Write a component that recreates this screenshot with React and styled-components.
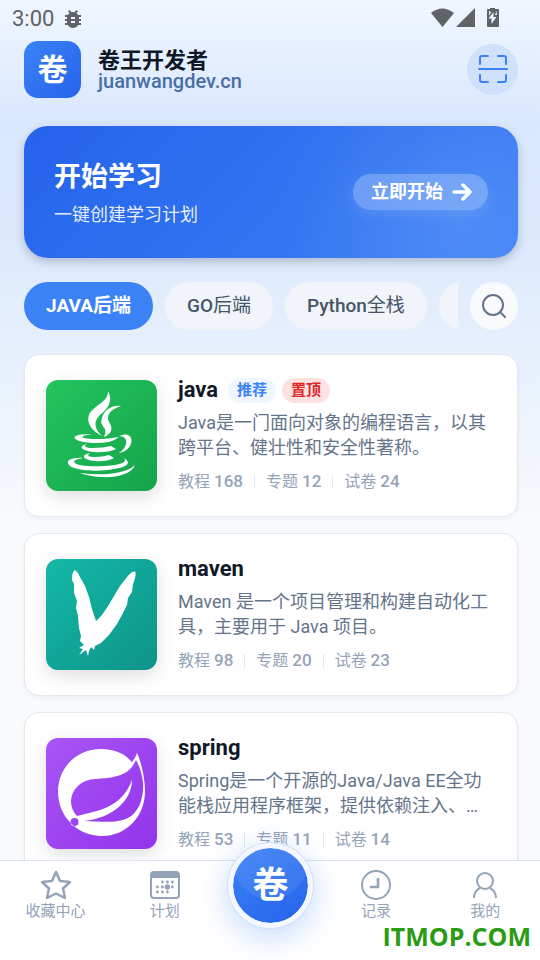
import React, { useState } from "react"
import styled, { createGlobalStyle } from "styled-components"

const GlobalStyle = createGlobalStyle`
  * {
    box-sizing: border-box;
  }
  body {
    margin: 0;
    font-family: Roboto, "Noto Sans CJK SC", sans-serif;
    color: #111827;
  }
  button {
    font-family: inherit;
    border: 0;
    padding: 0;
    cursor: pointer;
  }
  h1, h2, h3, p {
    margin: 0;
  }
`

const Page = styled.div`
  position: relative;
  display: flex;
  flex-direction: column;
  height: 100vh;
  overflow: hidden;
  background: linear-gradient(
    180deg,
    #f0f6ff 0,
    #dae8fe 120px,
    #dce9fd 230px,
    #e8f1fd 370px,
    #f8fafc 520px
  );
`

const StatusBar = styled.div`
  display: flex;
  align-items: center;
  height: 37px;
  padding: 0 41px 0 12px;
  font-size: 22px;
  line-height: 37px;
  color: #5f6368;
`

const StatusIcons = styled.div`
  display: flex;
  flex: 1;
  align-items: center;
  justify-content: ${({ $end }) => ($end ? "flex-end" : "flex-start")};
  margin-left: 7px;
`

const Header = styled.header`
  display: flex;
  align-items: center;
  gap: 17px;
  padding: 4px 22px 0 24px;
`

const Logo = styled.div`
  display: grid;
  place-items: center;
  width: 57px;
  height: 57px;
  border-radius: 14px;
  background: linear-gradient(135deg, #3b82f6, #2563eb);
  color: #fff;
  font-size: 30px;
  font-weight: 700;
  line-height: 30px;
`

const Brand = styled.div`
  flex: 1;
`

const BrandName = styled.h1`
  font-size: 22px;
  font-weight: 700;
  line-height: 22px;
`

const BrandUrl = styled.p`
  font-size: 20px;
  font-weight: 500;
  line-height: 18px;
  color: #4a6fa5;
`

const ScanButton = styled.button`
  display: grid;
  place-items: center;
  width: 51px;
  height: 51px;
  border-radius: 50%;
  background: #d0e1fd;
`

const Content = styled.main`
  flex: 1;
  min-height: 0;
  overflow-y: auto;
  scrollbar-width: none;
  padding: 28px 22px 0 24px;
`

const Hero = styled.section`
  display: flex;
  align-items: center;
  justify-content: space-between;
  height: 132px;
  padding: 0 30px;
  border-radius: 24px;
  background:
    radial-gradient(circle at 88% 72%, rgba(255, 255, 255, 0.11), transparent 180px),
    linear-gradient(135deg, #2563eb, #3b82f6);
  box-shadow: 0 4px 10px rgba(50, 65, 90, 0.28);
  color: #fff;
`

const HeroTitle = styled.h2`
  font-size: 27px;
  font-weight: 700;
  line-height: 40px;
`

const HeroText = styled.p`
  margin-top: 6px;
  font-size: 18px;
  line-height: 24px;
  color: rgba(255, 255, 255, 0.9);
`

const StartButton = styled.button`
  display: flex;
  align-items: center;
  gap: 9px;
  height: 36px;
  padding: 0 16px 0 18px;
  border-radius: 18px;
  background: rgba(255, 255, 255, 0.25);
  box-shadow: 0 4px 12px rgba(255, 255, 255, 0.12);
  color: #fff;
  font-size: 18px;
  font-weight: 700;
  line-height: 34px;
`

const Toolbar = styled.div`
  display: flex;
  gap: 12px;
  margin-top: 24px;
`

const Tabs = styled.div`
  display: flex;
  flex: 1;
  gap: 12px;
  min-width: 0;
  overflow: hidden;
`

const Tab = styled.button`
  flex: none;
  height: 48px;
  padding: 0 22px;
  border-radius: 24px;
  background: ${({ $active }) => ($active ? "#3b82f6" : "#f1f5f9")};
  color: ${({ $active }) => ($active ? "#fff" : "#475569")};
  font-size: 19px;
  font-weight: ${({ $active }) => ($active ? 700 : 500)};
  line-height: 46px;
`

const TabCjk = styled.span`
  font-weight: ${({ $active }) => ($active ? 700 : 400)};
`

const SearchButton = styled.button`
  display: grid;
  flex: none;
  place-items: center;
  width: 48px;
  height: 48px;
  border-radius: 50%;
  background: #f8fafc;
`

const List = styled.div`
  display: grid;
  gap: 16px;
  padding: 24px 0;
`

const Card = styled.article`
  display: flex;
  align-items: flex-start;
  gap: 21px;
  min-height: 163px;
  padding: 20px 21px;
  border: 1px solid #e2e8f0;
  border-radius: 15px;
  background: #fff;
  box-shadow: 0 2px 4px rgba(30, 64, 120, 0.05);
`

const Cover = styled.div`
  flex: none;
  width: 111px;
  height: 111px;
  margin-top: 5px;
  border-radius: 12px;
  background: linear-gradient(135deg, ${({ $from }) => $from}, ${({ $to }) => $to});
  box-shadow: 0 6px 18px rgba(0, 0, 0, 0.13);
`

const CardBody = styled.div`
  flex: 1;
  min-width: 0;
`

const CardHead = styled.div`
  display: flex;
  align-items: center;
  gap: 6px;
  height: 30px;
`

const CardTitle = styled.h3`
  margin-right: 4px;
  font-size: 22px;
  font-weight: 700;
  line-height: 30px;
`

const Tag = styled.span`
  height: 25px;
  padding: 0 9px;
  border-radius: 13px;
  background: ${({ $hot }) => ($hot ? "#fee2e2" : "#eff6ff")};
  color: ${({ $hot }) => ($hot ? "#dc2626" : "#3b82f6")};
  font-size: 15px;
  font-weight: 700;
  line-height: 24px;
`

const Description = styled.p`
  display: -webkit-box;
  margin-top: 5px;
  overflow: hidden;
  -webkit-box-orient: vertical;
  -webkit-line-clamp: 2;
  font-size: 18px;
  line-height: 25px;
  color: #64748b;
`

const Stats = styled.div`
  display: flex;
  align-items: center;
  margin-top: 9px;
  font-size: 16px;
  line-height: 25px;
  color: #94a3b8;

  b {
    font-size: 17px;
    font-weight: 500;
  }
`

const Divider = styled.i`
  width: 1px;
  height: 14px;
  margin: 0 11px;
  background: #e2e8f0;
`

const NavBar = styled.nav`
  position: relative;
  display: grid;
  grid-template-columns: 1fr 1fr 102px 1fr 1fr;
  flex: none;
  height: 100px;
  padding-left: 1px;
  border-top: 1px solid #dbe5f1;
  background: #fff;
`

const NavButton = styled.button`
  display: flex;
  flex-direction: column;
  align-items: center;
  height: 62px;
  padding-top: 9px;
  background: none;
  color: #94a3b8;
  font-size: 15px;
  line-height: 22px;
`

const CenterButton = styled.button`
  display: grid;
  place-items: center;
  justify-self: center;
  width: 85px;
  height: 85px;
  margin-top: -18px;
  border: 5px solid #f3f7ff;
  border-radius: 50%;
  background:
    radial-gradient(circle at 50% 18%, rgba(255, 255, 255, 0.07) 37px, transparent 38px) padding-box,
    linear-gradient(145deg, #3b82f6, #2563eb) padding-box;
  box-shadow: 0 0 0 1px #cfdef5, 0 8px 32px rgba(59, 130, 246, 0.32);
  color: #fff;
  font-size: 36px;
  font-weight: 700;
  line-height: 36px;
`

const Watermark = styled.div`
  position: absolute;
  right: 9px;
  bottom: 6px;
  font-family: "Open Sans", sans-serif;
  font-size: 25px;
  font-weight: 700;
  line-height: 36px;
  color: #2a9b12;
`

const BugIcon = () => (
  <svg width="24" height="24" viewBox="0 0 24 24" fill="currentColor">
    <path d="M20 8h-2.81a6 6 0 0 0-1.82-1.96L17 4.41 15.59 3l-2.17 2.17a6 6 0 0 0-2.83 0L8.41 3 7 4.41l1.62 1.63A6 6 0 0 0 6.81 8H4v2h2.09A6 6 0 0 0 6 11v1H4v2h2v1q0 .5.09 1H4v2h2.81a6 6 0 0 0 10.38 0H20v-2h-2.09q.09-.5.09-1v-1h2v-2h-2v-1q0-.5-.09-1H20zm-6 8h-4v-2h4zm0-4h-4v-2h4z" />
  </svg>
)

const SignalIcons = () => (
  <svg width="68" height="22" viewBox="0 1 68 22" fill="currentColor">
    <path d="M0 6Q11-3 23 6L11.500 20z" />
    <path d="M44 1V20H25z" />
    <path
      fillRule="evenodd"
      d="M59 0h5v2h3q1 0 1 1v16q0 1-1 1H57q-1 0-1-1V3q0-1 1-1h2zM62.500 5l-5 6.500h3V17l5-7h-3zM58 4v5l2-4zM65.500 4l-1.500 4h2z"
    />
  </svg>
)

const ScanIcon = () => (
  <svg width="30" height="30" viewBox="0 1 30 30" fill="none" stroke="#3b82f6" strokeWidth="2" strokeLinecap="round">
    <path d="M10 2H4Q2 2 2 4V10M20 2H26Q28 2 28 4V10M2 21V26Q2 28 4 28H10M28 21V26Q28 28 26 28H20M1 15H29" />
  </svg>
)

const ArrowIcon = () => (
  <svg width="20" height="20" viewBox="0 0 20 20" fill="none" stroke="currentColor" strokeWidth="3.500" strokeLinecap="round" strokeLinejoin="round">
    <path d="M2 10H18M11 3L18 10L11 17" />
  </svg>
)

const SearchIcon = () => (
  <svg width="26" height="26" viewBox="0 0 26 26" fill="none" stroke="#64748b" strokeWidth="2" strokeLinecap="round">
    <circle cx="12" cy="12" r="10" />
    <path d="M19 19L24 24" />
  </svg>
)

const JavaArt = () => (
  <svg viewBox="0 0 111 111" fill="#fff">
    <path d="M62 11C68 23 60 30 53 36C47 43 49 49 56 56C46 51 40 43 43 35C46 26 63 22 62 11z" />
    <path d="M75 26C66 29 62 33 62 38C62 43 67 45 65 51Q63 55 58 57Q60 52 59 49C56 45 54 42 56 38C58 30 66 25 75 26z" />
    <path d="M46 54C38 55 34 57 38 58C46 60 63 59 73 57Q68 61 63 62C51 64 37 63 31 60C24 56 33 54 46 54z" />
    <path d="M73 56C79 53 85.500 54 85.500 61C85 68 79 72 73 73C79 69 81 64 80 60Q78 56 73 56z" />
    <path d="M41 64C37 66 39 68 47 68Q57 68 65 66L70 69Q61 73 48 72C36 71 31 66 41 64z" />
    <path d="M44 73C40 76 43 77 49 77Q57 77 63 75L68 78Q60 82 49 81C37 80 34 75 44 73z" />
    <path d="M37 78Q27 80 28 82C30 86 45 87 59 86C75 85 82 82 78 78C86 83 81 87 68 89C53 92 31 91 24 86C18 81 25 77 37 78z" />
    <path d="M89 85C86 94 70 98 55 97Q42 96 34 93C56 96 80 94 89 85z" />
  </svg>
)

const MavenArt = () => (
  <svg viewBox="0 0 111 111" fill="#fff">
    <path d="M29 11Q32 13 34 18L39 27L43 38L46 50L50 62L56 56L62 47L68 37L74 27L81 18Q87 11 89.500 13Q90 18 87 25L86 33L82 39L81 46L77 54L71 65L63 76L55 84L49 87L48 91L45 88L43 92L42 97L40 91L33 96L37 90L33 89L38 86L34 82L35 77L33 69L32 57L30 49L31 42L28 34L28 25L26 21Q26 12 29 11z" />
  </svg>
)

const SpringArt = () => (
  <svg viewBox="0 0 111 111" fill="#fff">
    <path
      fillRule="evenodd"
      d="M91 15C94 21 99 38 99 53C99 79 80 98 56 98C31 98 12 78 12 54C12 29 31 11 55 11C69 11 79 16 86 24Q89 21 91 15zM90 22C86 31 80 36 71 38C56 43 42 37 31 49C23 57 23 70 31 78L47 74C67 69 79 60 86 42C86 62 67 80 38 83C58 84 72 85 82 80C93 74 98 60 97 45Q96 33 90 22zM28.500 80A4 4 0 1 0 28.500 88A4 4 0 1 0 28.500 80z"
    />
  </svg>
)

const StarIcon = () => (
  <svg width="32" height="30" viewBox="0 0 32 30" fill="none" stroke="currentColor" strokeWidth="2.500" strokeLinejoin="round">
    <path d="M16 2L20 11L30 12L23 18.500L25 28L16 23.500L7 28L9 18.500L2 12L12 11z" />
  </svg>
)

const calendarDots = [
  [12.4, 12], [17.4, 12], [22.4, 12],
  [7.4, 17], [12.4, 17], [22.4, 17],
  [7.4, 22], [12.4, 22], [17.4, 22],
]

const CalendarIcon = () => (
  <svg width="30" height="30" viewBox="0 0 30 30" fill="currentColor">
    <path fillRule="evenodd" d="M4 1H26Q30 1 30 5V25Q30 29 26 29H4Q0 29 0 25V5Q0 1 4 1zM2 8V25Q2 27 4 27H26Q28 27 28 25V8z" />
    {calendarDots.map(([x, y]) => (
      <circle key={`${x}-${y}`} cx={x} cy={y} r="1.400" />
    ))}
    <circle cx="17.400" cy="17" r="2.700" />
  </svg>
)

const ClockIcon = () => (
  <svg width="30" height="30" viewBox="0 0 30 30" fill="none" stroke="currentColor" strokeWidth="2">
    <circle cx="15" cy="15" r="14" />
    <path d="M17 8V17H9" strokeWidth="2.500" />
  </svg>
)

const UserIcon = () => (
  <svg width="30" height="30" viewBox="0 0 30 30" fill="none" stroke="currentColor" strokeWidth="2">
    <circle cx="15" cy="11" r="8" />
    <path d="M4 28Q4 21 10 18M26 28Q26 21 20 18" />
  </svg>
)

const tabs = [
  { latin: "JAVA", cjk: "后端" },
  { latin: "GO", cjk: "后端" },
  { latin: "Python", cjk: "全栈" },
  { latin: "", cjk: "前端" },
]

const courses = [
  {
    title: "java",
    tags: [{ text: "推荐" }, { text: "置顶", hot: true }],
    description: "Java是一门面向对象的编程语言，以其跨平台、健壮性和安全性著称。",
    stats: [168, 12, 24],
    from: "#22c55e",
    to: "#16a34a",
    Art: JavaArt,
  },
  {
    title: "maven",
    tags: [],
    description: "Maven 是一个项目管理和构建自动化工具，主要用于 Java 项目。",
    stats: [98, 20, 23],
    from: "#14b8a6",
    to: "#0d9488",
    Art: MavenArt,
  },
  {
    title: "spring",
    tags: [],
    description:
      "Spring是一个开源的Java/Java EE全功能栈应用程序框架，提供依赖注入、事务管理等功能。",
    stats: [53, 11, 14],
    from: "#a855f7",
    to: "#9333ea",
    Art: SpringArt,
  },
]

const statLabels = ["教程", "专题", "试卷"]

const Course = ({ course }) => {
  const { title, tags, description, stats, from, to, Art } = course

  return (
    <Card>
      <Cover $from={from} $to={to}>
        <Art />
      </Cover>
      <CardBody>
        <CardHead>
          <CardTitle>{title}</CardTitle>
          {tags.map(tag => (
            <Tag key={tag.text} $hot={tag.hot}>
              {tag.text}
            </Tag>
          ))}
        </CardHead>
        <Description>{description}</Description>
        <Stats>
          {stats.map((value, i) => (
            <React.Fragment key={statLabels[i]}>
              {i > 0 && <Divider />}
              <span>
                {statLabels[i]} <b>{value}</b>
              </span>
            </React.Fragment>
          ))}
        </Stats>
      </CardBody>
    </Card>
  )
}

const NavItem = ({ icon, label }) => (
  <NavButton type="button">
    {icon}
    <span>{label}</span>
  </NavButton>
)

const App = () => {
  const [current, setCurrent] = useState(0)

  return (
    <Page>
      <GlobalStyle />
      <StatusBar>
        <span>3:00</span>
        <StatusIcons>
          <BugIcon />
        </StatusIcons>
        <StatusIcons $end>
          <SignalIcons />
        </StatusIcons>
      </StatusBar>
      <Header>
        <Logo>卷</Logo>
        <Brand>
          <BrandName>卷王开发者</BrandName>
          <BrandUrl>juanwangdev.cn</BrandUrl>
        </Brand>
        <ScanButton type="button" aria-label="扫一扫">
          <ScanIcon />
        </ScanButton>
      </Header>
      <Content>
        <Hero>
          <div>
            <HeroTitle>开始学习</HeroTitle>
            <HeroText>一键创建学习计划</HeroText>
          </div>
          <StartButton type="button">
            立即开始
            <ArrowIcon />
          </StartButton>
        </Hero>
        <Toolbar>
          <Tabs>
            {tabs.map((tab, i) => (
              <Tab
                key={tab.latin}
                type="button"
                $active={i === current}
                onClick={() => setCurrent(i)}
              >
                {tab.latin}
                <TabCjk $active={i === current}>{tab.cjk}</TabCjk>
              </Tab>
            ))}
          </Tabs>
          <SearchButton type="button" aria-label="搜索">
            <SearchIcon />
          </SearchButton>
        </Toolbar>
        <List>
          {courses.map(course => (
            <Course key={course.title} course={course} />
          ))}
        </List>
      </Content>
      <NavBar>
        <NavItem icon={<StarIcon />} label="收藏中心" />
        <NavItem icon={<CalendarIcon />} label="计划" />
        <CenterButton type="button">卷</CenterButton>
        <NavItem icon={<ClockIcon />} label="记录" />
        <NavItem icon={<UserIcon />} label="我的" />
      </NavBar>
      <Watermark>ITMOP.COM</Watermark>
    </Page>
  )
}

export default App
